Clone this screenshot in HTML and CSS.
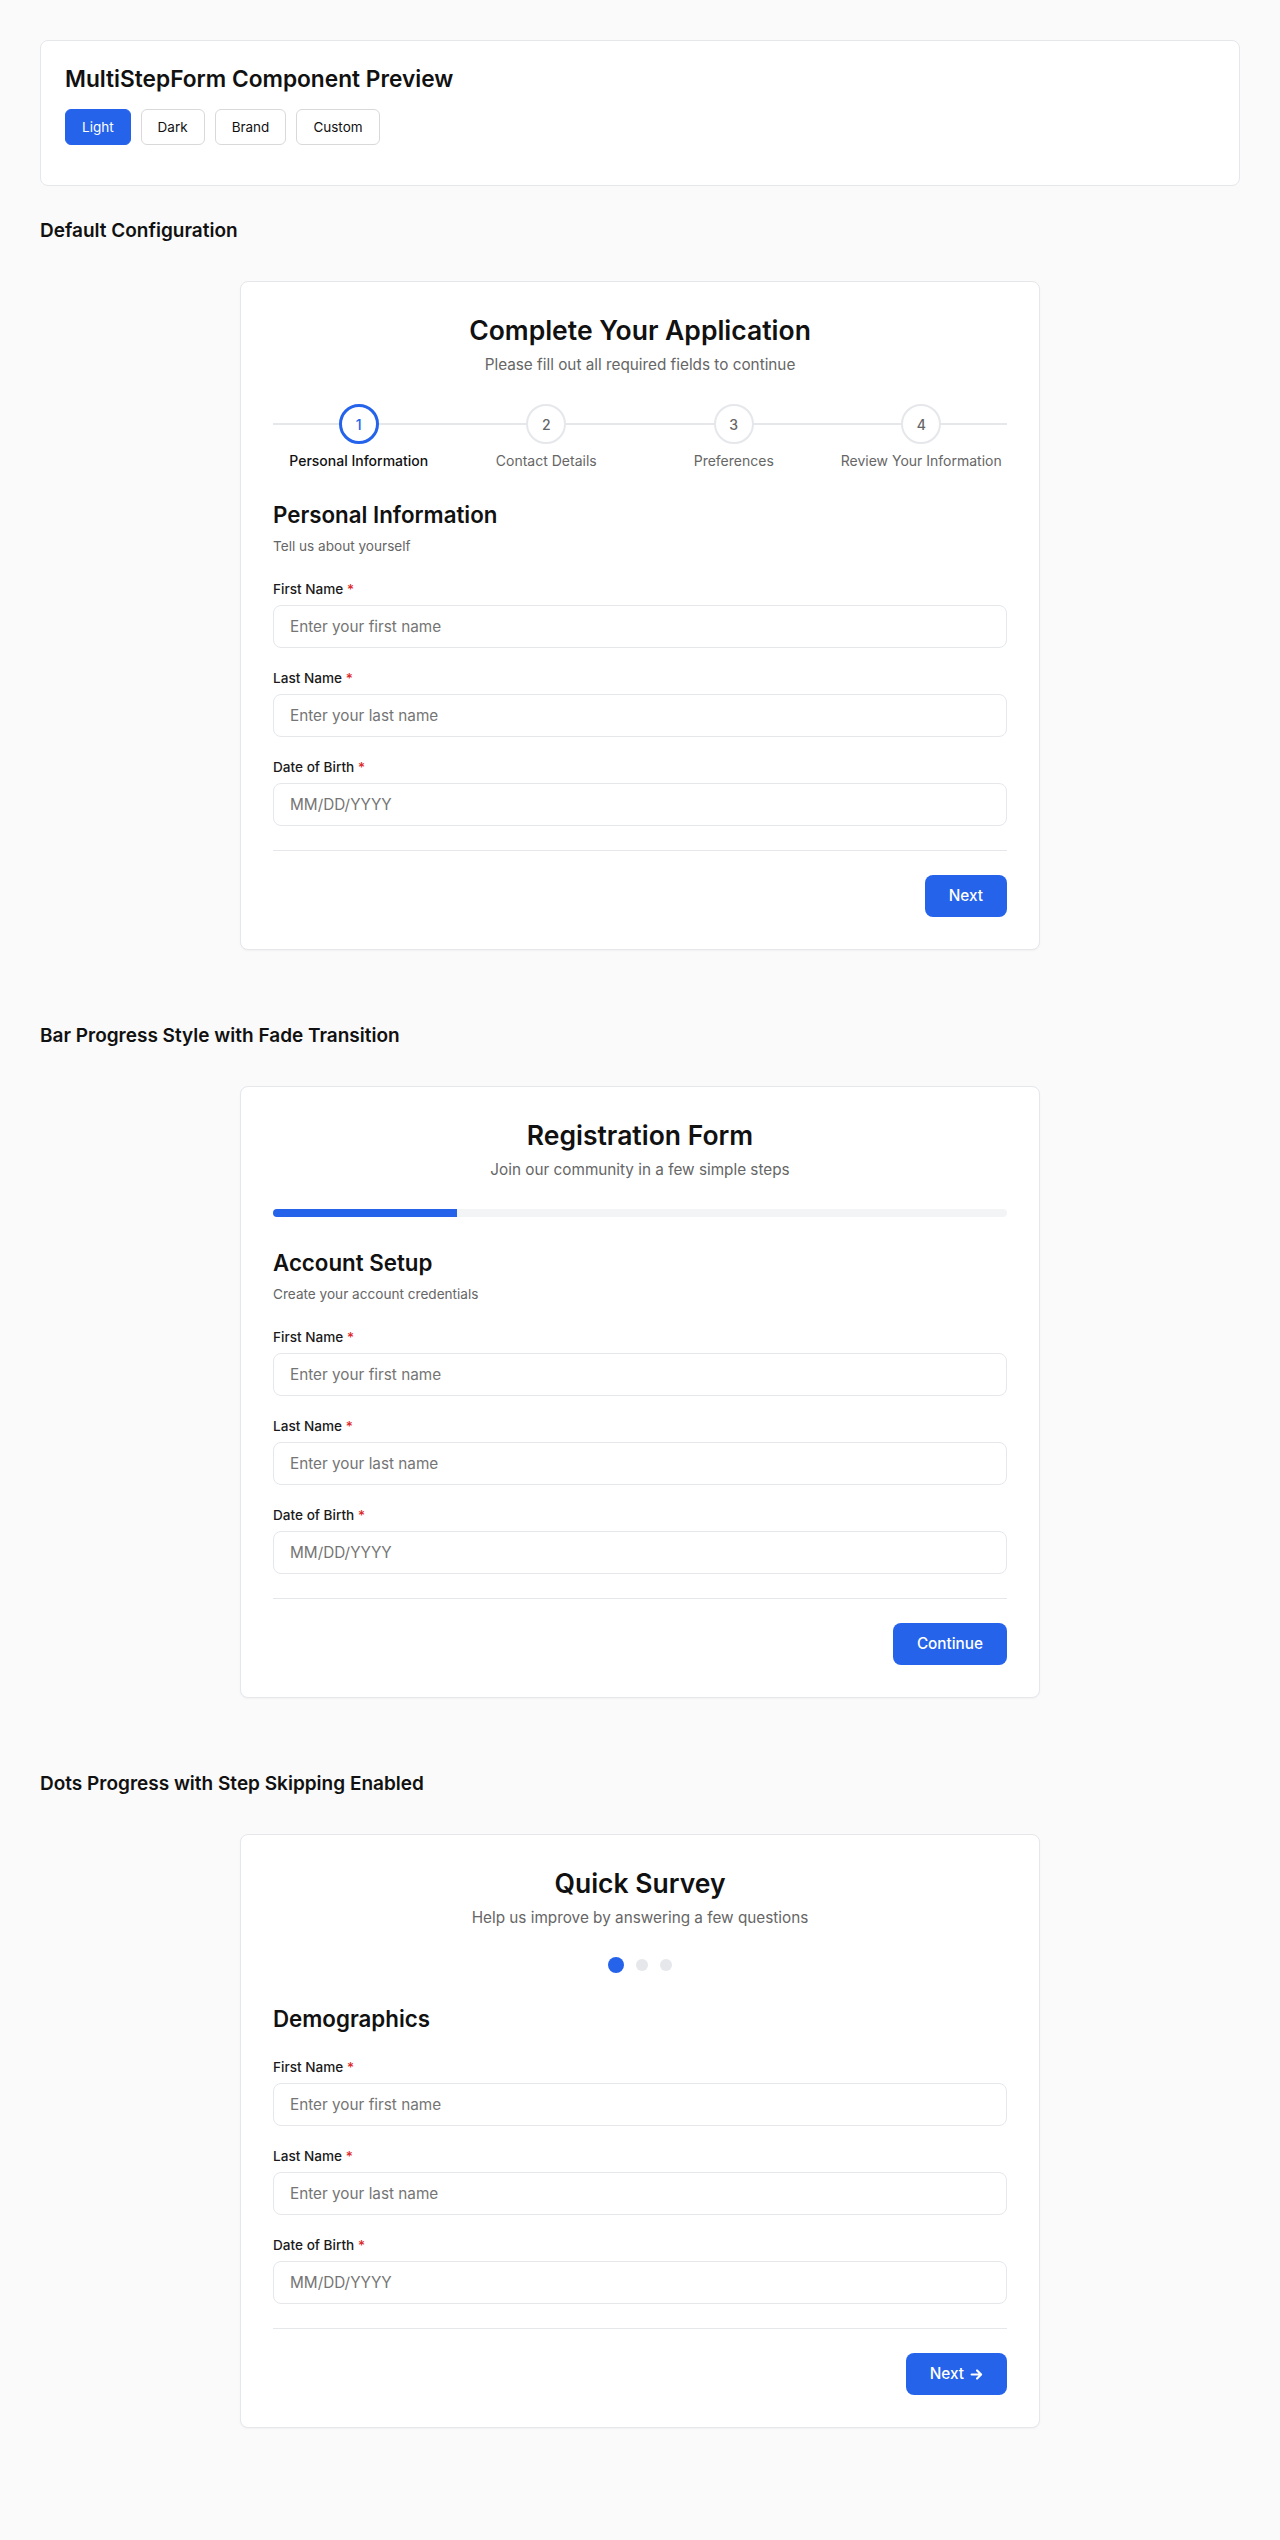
FILE: index.html
```html
<!DOCTYPE html>
<html lang="en">
<head>
<meta charset="utf-8">
<title>MultiStepForm Component Preview</title>
<link rel="stylesheet" href="styles.css">
</head>
<body>
<div class="page">

  <header class="panel">
    <h1 class="panel-title">MultiStepForm Component Preview</h1>
    <div class="theme-switch">
      <button class="theme-btn is-active" type="button">Light</button>
      <button class="theme-btn" type="button">Dark</button>
      <button class="theme-btn" type="button">Brand</button>
      <button class="theme-btn" type="button">Custom</button>
    </div>
  </header>

  <!-- Stepper progress -->
  <section class="demo">
    <h2 class="demo-title">Default Configuration</h2>
    <div class="demo-stage">
      <form class="msf">
        <div class="msf-header">
          <h3 class="msf-title">Complete Your Application</h3>
          <p class="msf-subtitle">Please fill out all required fields to continue</p>
        </div>

        <ol class="steps">
          <li class="step is-current"><span class="step-dot">1</span><span class="step-label">Personal Information</span></li>
          <li class="step"><span class="step-dot">2</span><span class="step-label">Contact Details</span></li>
          <li class="step"><span class="step-dot">3</span><span class="step-label">Preferences</span></li>
          <li class="step"><span class="step-dot">4</span><span class="step-label">Review Your Information</span></li>
        </ol>

        <div class="step-head">
          <h4 class="step-title">Personal Information</h4>
          <p class="step-desc">Tell us about yourself</p>
        </div>

        <div class="fields">
          <div class="field">
            <label for="d-first">First Name <span class="req">*</span></label>
            <input id="d-first" type="text" placeholder="Enter your first name">
          </div>
          <div class="field">
            <label for="d-last">Last Name <span class="req">*</span></label>
            <input id="d-last" type="text" placeholder="Enter your last name">
          </div>
          <div class="field">
            <label for="d-dob">Date of Birth <span class="req">*</span></label>
            <input id="d-dob" type="text" placeholder="MM/DD/YYYY">
          </div>
        </div>

        <div class="msf-actions">
          <button class="btn-primary" type="button">Next</button>
        </div>
      </form>
    </div>
  </section>

  <!-- Bar progress -->
  <section class="demo">
    <h2 class="demo-title">Bar Progress Style with Fade Transition</h2>
    <div class="demo-stage">
      <form class="msf">
        <div class="msf-header">
          <h3 class="msf-title">Registration Form</h3>
          <p class="msf-subtitle">Join our community in a few simple steps</p>
        </div>

        <div class="bar"><div class="bar-fill" style="width: 25%"></div></div>

        <div class="step-head">
          <h4 class="step-title">Account Setup</h4>
          <p class="step-desc">Create your account credentials</p>
        </div>

        <div class="fields">
          <div class="field">
            <label for="b-first">First Name <span class="req">*</span></label>
            <input id="b-first" type="text" placeholder="Enter your first name">
          </div>
          <div class="field">
            <label for="b-last">Last Name <span class="req">*</span></label>
            <input id="b-last" type="text" placeholder="Enter your last name">
          </div>
          <div class="field">
            <label for="b-dob">Date of Birth <span class="req">*</span></label>
            <input id="b-dob" type="text" placeholder="MM/DD/YYYY">
          </div>
        </div>

        <div class="msf-actions">
          <button class="btn-primary" type="button">Continue</button>
        </div>
      </form>
    </div>
  </section>

  <!-- Dots progress -->
  <section class="demo">
    <h2 class="demo-title">Dots Progress with Step Skipping Enabled</h2>
    <div class="demo-stage">
      <form class="msf">
        <div class="msf-header">
          <h3 class="msf-title">Quick Survey</h3>
          <p class="msf-subtitle">Help us improve by answering a few questions</p>
        </div>

        <div class="dots">
          <span class="dot is-current"></span>
          <span class="dot"></span>
          <span class="dot"></span>
        </div>

        <div class="step-head">
          <h4 class="step-title">Demographics</h4>
        </div>

        <div class="fields">
          <div class="field">
            <label for="s-first">First Name <span class="req">*</span></label>
            <input id="s-first" type="text" placeholder="Enter your first name">
          </div>
          <div class="field">
            <label for="s-last">Last Name <span class="req">*</span></label>
            <input id="s-last" type="text" placeholder="Enter your last name">
          </div>
          <div class="field">
            <label for="s-dob">Date of Birth <span class="req">*</span></label>
            <input id="s-dob" type="text" placeholder="MM/DD/YYYY">
          </div>
        </div>

        <div class="msf-actions">
          <button class="btn-primary" type="button">Next <svg class="btn-arrow" viewBox="0 0 12 12" aria-hidden="true"><path d="M1.5 6h8.5M6.5 2.25 10.25 6 6.5 9.75"/></svg></button>
        </div>
      </form>
    </div>
  </section>

</div>
</body>
</html>
```

FILE: styles.css
```css
* {
  box-sizing: border-box;
}

body {
  margin: 0;
  background: #fafafa;
  color: #111;
  font-family: Inter, "Noto Sans", Arial, sans-serif;
}

.page {
  padding: 40px;
}

/* Preview header with theme buttons */
.panel {
  background: #fff;
  border: 1px solid #e5e7eb;
  border-radius: 8px;
  padding: 24px;
  margin-bottom: 31px;
}

.panel-title {
  margin: 0 0 16px;
  font-size: 22.7px;
  font-weight: 600;
  line-height: 28px;
}

.theme-switch {
  display: flex;
  gap: 10px;
  margin-bottom: 16px;
}

.theme-btn {
  font-family: inherit;
  font-size: 13.5px;
  line-height: 18px;
  padding: 8px 16px;
  border: 1px solid #d9d9d9;
  border-radius: 6px;
  background: #fff;
  color: #111;
}

.theme-btn.is-active {
  background: #2563eb;
  border-color: #2563eb;
  color: #fff;
}

/* Demo sections */
.demo {
  margin-bottom: 52px;
}

.demo-title {
  margin: 0 0 16px;
  font-size: 19px;
  font-weight: 600;
  line-height: 28px;
}

.demo-stage {
  padding: 20px 0;
}

/* Form card */
.msf {
  max-width: 800px;
  margin: 0 auto;
  background: #fff;
  border: 1px solid #e5e7eb;
  border-radius: 8px;
  padding: 32px;
  box-shadow: 0 1px 2px rgba(0, 0, 0, 0.04);
}

.msf-header {
  text-align: center;
  margin-bottom: 30px;
}

.msf-title {
  margin: 0 0 8px;
  font-size: 26.5px;
  font-weight: 600;
  line-height: 33px;
}

.msf-subtitle {
  margin: 0;
  font-size: 15.3px;
  line-height: 19px;
  color: #666;
}

/* Numbered stepper */
.steps {
  list-style: none;
  margin: 0 0 32px;
  padding: 0;
  display: flex;
  gap: 16px;
  position: relative;
}

.steps::before {
  content: "";
  position: absolute;
  left: 0;
  right: 0;
  top: 19px;
  height: 2px;
  background: #e5e7eb;
}

.step {
  flex: 1;
  display: flex;
  flex-direction: column;
  align-items: center;
  position: relative;
}

.step-dot {
  width: 40px;
  height: 40px;
  border: 2px solid #e5e7eb;
  border-radius: 50%;
  background: #fff;
  display: flex;
  align-items: center;
  justify-content: center;
  font-size: 14px;
  font-weight: 500;
  color: #666;
}

.step.is-current .step-dot {
  border: 3px solid #2563eb;
  color: #2563eb;
}

.step-label {
  margin-top: 9px;
  font-size: 14px;
  line-height: 16px;
  color: #666;
  text-align: center;
}

.step.is-current .step-label {
  color: #111;
  font-weight: 500;
}

/* Bar progress */
.bar {
  height: 8px;
  background: #f3f4f6;
  border-radius: 4px;
  overflow: hidden;
  margin-bottom: 32px;
}

.bar-fill {
  height: 100%;
  background: #2563eb;
}

/* Dots progress */
.dots {
  display: flex;
  justify-content: center;
  align-items: center;
  gap: 12px;
  height: 16px;
  margin-bottom: 32px;
}

.dot {
  width: 12px;
  height: 12px;
  border-radius: 50%;
  background: #e5e7eb;
}

.dot.is-current {
  width: 16px;
  height: 16px;
  background: #2563eb;
}

/* Step content */
.step-head {
  margin-bottom: 24px;
}

.step-title {
  margin: 0;
  font-size: 22.3px;
  font-weight: 600;
  line-height: 28px;
}

.step-desc {
  margin: 8px 0 0;
  font-size: 13.6px;
  line-height: 18px;
  color: #666;
}

.fields {
  display: flex;
  flex-direction: column;
  gap: 20px;
}

.field label {
  display: block;
  margin-bottom: 6px;
  font-size: 13.6px;
  font-weight: 500;
  line-height: 20px;
  color: #1a1a1a;
}

.req {
  color: #dc2626;
}

.field input {
  display: block;
  width: 100%;
  height: 43px;
  padding: 0 16px;
  font-family: inherit;
  font-size: 15.3px;
  color: #111;
  background: #fff;
  border: 1px solid #e5e7eb;
  border-radius: 8px;
}

.field input::placeholder {
  color: #757575;
}

.msf-actions {
  margin-top: 24px;
  padding-top: 24px;
  border-top: 1px solid #e5e7eb;
  display: flex;
  justify-content: flex-end;
}

.btn-primary {
  display: inline-flex;
  align-items: center;
  gap: 6px;
  font-family: inherit;
  font-size: 15.3px;
  font-weight: 500;
  line-height: 22px;
  padding: 10px 24px;
  border: 0;
  border-radius: 8px;
  background: #2563eb;
  color: #fff;
}

.btn-arrow {
  width: 13px;
  height: 13px;
  fill: none;
  stroke: currentColor;
  stroke-width: 2;
  stroke-linecap: round;
  stroke-linejoin: round;
}
```
